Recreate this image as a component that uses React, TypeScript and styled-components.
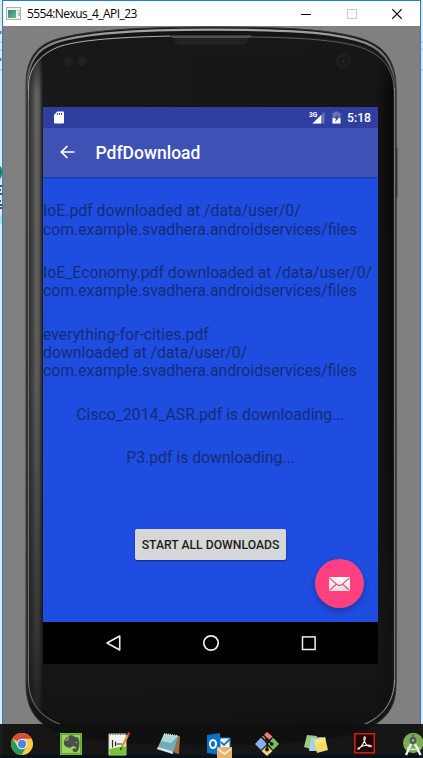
import React from "react";
import styled, { createGlobalStyle } from "styled-components";

const GlobalStyle = createGlobalStyle`
  html, body { margin: 0; padding: 0; overflow: hidden; background: #e4e8ec; }
  * { box-sizing: border-box; }
`;

const Desktop = styled.div`
  position: relative;
  width: 423px;
  height: 758px;
  display: flex;
  flex-direction: column;
  overflow: hidden;
  background: #e3e7ea;
  font-family: Roboto, sans-serif;
`;

const Backdrop = styled.svg`
  position: absolute;
  left: 0;
  top: 0;
`;

const EmulatorWindow = styled.div`
  position: relative;
  height: 724px;
  width: 419px;
  margin-left: 2px;
  border: 1px solid #1c82d4;
  border-bottom: 0;
  display: flex;
  flex-direction: column;
`;

const TitleBar = styled.div`
  height: 25px;
  flex: none;
  background: #fff;
  display: flex;
  align-items: center;
  padding-left: 3px;
`;

const TitleText = styled.div`
  flex: 1;
  margin-left: 6px;
  font: 12px/24px "Open Sans", "Noto Sans", sans-serif;
  letter-spacing: -0.55px;
  color: #000;
  white-space: nowrap;
`;

const WindowButton = styled.div`
  width: 45.5px;
  height: 25px;
  display: flex;
  align-items: center;
  justify-content: center;
`;

const Screen = styled.div`
  margin: 81px 0 0 40px;
  width: 335px;
  height: 557px;
  display: flex;
  flex-direction: column;
  background: #1f4de0;
`;

const StatusBar = styled.div`
  height: 21px;
  flex: none;
  background: #303f9f;
  color: #fff;
  display: flex;
  align-items: center;
  padding: 0 7px 0 10px;
`;

const SignalIcon = styled.svg`
  margin-left: auto;
  margin-right: 7px;
`;

const Clock = styled.div`
  margin-left: 6px;
  padding-top: 1px;
  font-size: 12.2px;
  line-height: 21px;
  font-weight: 500;
`;

const AppBar = styled.div`
  position: relative;
  height: 49px;
  flex: none;
  background: #3f51b5;
  box-shadow: 0 1px 2px rgba(0, 0, 0, 0.3);
  display: flex;
  align-items: center;
  padding-left: 16px;
  color: #fff;
`;

const BackIcon = styled.svg`
  margin-bottom: 1px;
`;

const AppTitle = styled.div`
  margin-left: 19.5px;
  padding-top: 2px;
  font-size: 17.5px;
  font-weight: 500;
  line-height: 47px;
`;

const Content = styled.div`
  position: relative;
  flex: 1;
  display: flex;
  flex-direction: column;
  align-items: center;
  gap: 25px;
  padding-top: 25.3px;
`;

const Message = styled.div<{ $full?: boolean }>`
  ${(p) => (p.$full ? "align-self: stretch;" : "")}
  font-size: 15.77px;
  line-height: 18.35px;
  color: #142c79;
  white-space: pre;
`;

const StartButton = styled.button`
  margin-top: 37px;
  width: 151px;
  height: 31px;
  flex: none;
  padding: 0;
  border: 0;
  border-radius: 2px;
  background: #d6d7d7;
  box-shadow: 0 1px 2px rgba(0, 0, 0, 0.45);
  color: #1c1c1d;
  font: 500 12.2px Roboto, sans-serif;
  white-space: nowrap;
`;

const Fab = styled.div`
  position: absolute;
  right: 14px;
  bottom: 14px;
  width: 49px;
  height: 49px;
  border-radius: 50%;
  background: #ff4081;
  box-shadow: 0 3px 6px rgba(0, 0, 0, 0.28);
  display: flex;
  align-items: center;
  justify-content: center;
`;

const NavBar = styled.div`
  height: 42px;
  flex: none;
  background: #000;
  display: flex;
  align-items: center;
  padding-left: 59.5px;
  gap: 78px;
`;

const Taskbar = styled.div`
  position: relative;
  height: 34px;
  flex: none;
  background: linear-gradient(rgba(15, 15, 15, 0.94) 0 31px, rgba(0, 12, 22, 0.95) 31px);
  display: flex;
  gap: 17px;
  padding: 4px 0 0 6px;
`;

const TaskIcon = styled.svg`
  width: 32px;
  height: 32px;
  flex: none;
  overflow: visible;
`;

const outer =
  "M26 84C26 60 36 46 54 40C84 30 140 27 211 27C282 27 325 29 356 37C384 44 396 60 396 88V684C396 706 388 720 364 730C336 741 280 745 211 745C140 745 86 742 58 732C36 724 26 708 26 684Z";
const inner =
  "M28 90C28 68 38 54 57 46.5C77 38.5 130 36 211 36C285 36 325 38 352 43.5C381 50 394 64 394 90V680C393 702 384 714 362 725C332 736 285 737 211 737C140 737 92 736 60 725C40 716 29 706 28 680Z";

function PhoneBackdrop() {
  return (
    <Backdrop width="423" height="758" viewBox="0 0 423 758">
      <defs>
        <linearGradient id="side" gradientUnits="userSpaceOnUse" x1="28" x2="394" y1="0" y2="0">
          <stop offset="0" stopColor="#292929" />
          <stop offset=".012" stopColor="#454545" />
          <stop offset=".022" stopColor="#646464" />
          <stop offset=".03" stopColor="#5b5b5b" />
          <stop offset=".041" stopColor="#181818" />
          <stop offset=".95" stopColor="#151515" />
          <stop offset="1" stopColor="#070707" />
        </linearGradient>
        <linearGradient id="fade" x1="0" x2="0" y1="0" y2="1">
          <stop offset="0" stopColor="#171717" />
          <stop offset=".03" stopColor="#171717" stopOpacity=".7" />
          <stop offset=".08" stopColor="#171717" stopOpacity="0" />
          <stop offset=".5" stopColor="#171717" stopOpacity=".1" />
          <stop offset=".86" stopColor="#171717" stopOpacity=".6" />
          <stop offset="1" stopColor="#101010" stopOpacity=".9" />
        </linearGradient>
        <linearGradient id="rim" gradientUnits="userSpaceOnUse" x1="0" x2="0" y1="27" y2="745">
          <stop offset="0" stopColor="#a5a5a5" />
          <stop offset=".03" stopColor="#777" />
          <stop offset=".09" stopColor="#444" />
          <stop offset=".9" stopColor="#353535" />
          <stop offset=".95" stopColor="#151515" />
        </linearGradient>
        <pattern id="mesh" width="4" height="4" patternUnits="userSpaceOnUse">
          <rect width="4" height="4" fill="#242424" />
          <path d="M0 0h1v1h-1zM2 2h1v1h-1z" fill="#111" />
        </pattern>
      </defs>
      <rect x="3" y="26" width="417" height="732" fill="#808080" />
      <path d="M0 42h2M0 50h2M0 70h2M421 42h2M421 49h2M421 70h2" stroke="#b5bbc0" />
      <path d="M0 31h1.5v3H0zM0 58h1.5v3H0z" fill="#777" />
      <path d="M0 166q2 1 2 6t-2 7z" fill="#11894d" />
      <path d="M0 186h2M0 190h1M0 194h2M0 201h1M0 205h2M0 208h2" stroke="#26221f" strokeWidth="1.5" />
      <path d="M0 215h2v9H0z" fill="#a5e5f2" />
      <path d="M396.7 148v49" stroke="#333" strokeWidth="1.5" />
      <path d={outer} fill="#141414" stroke="#353535" strokeWidth="1" />
      <path d={outer} transform="translate(1.5 2.9) scale(.993 .993)" fill="none" stroke="url(#rim)" strokeWidth="2.2" />
      <path d={inner} fill="url(#side)" />
      <path d={inner} fill="url(#fade)" />
      <path d={inner} fill="none" stroke="#252525" strokeWidth="1" />
      <path d="M28.5 100V86C29 68 39 55.5 57 47.5C77 39.5 125 37 172 36" fill="none" stroke="#bdbdbd" strokeWidth=".9" />
      <path d="M250 37C300 37.5 329 40 350 44.5C380 51 393 66 394 90" fill="none" stroke="#5b5b5b" strokeWidth="1" />
      <path d="M394.5 88V684" stroke="#777" strokeWidth="1.1" />
      <path d="M396 88V684" stroke="#353535" />
      <path d="M28.5 90V680C29 704 41 717 60 724" fill="none" stroke="#858585" strokeWidth=".8" />
      <path d="M394.5 680C394 703 382 717 365 724" fill="none" stroke="#969696" strokeWidth="1" />
      <path d="M169 35H252L248 38Q246 45 242 45H180Q176 45 174 39Z" fill="url(#mesh)" />
      <path d="M169 35.5H252L249 38H173Z" fill="#51515a" />
      <circle cx="68.5" cy="61.5" r="5" fill="#202020" />
      <circle cx="81.5" cy="61.5" r="5" fill="#202020" />
      <circle cx="343.5" cy="61" r="7.7" fill="#1e1e1f" />
      <circle cx="343.5" cy="61" r="4.5" fill="#19191c" />
      <circle cx="343.3" cy="61" r="1.5" fill="#25254c" />
    </Backdrop>
  );
}

function TaskIcons() {
  return (
    <>
      <TaskIcon viewBox="0 0 32 32">
        <circle cx="16" cy="16" r="11" fill="#fbcb43" />
        <path d="M16 16L6.4 10.6A11 11 0 0 1 25.6 10.8H16Z" fill="#d84c3e" />
        <path d="M6.4 10.6A11 11 0 0 0 15.5 27L20.5 18.5L16 20L11.5 18.5Z" fill="#249b5b" />
        <circle cx="16" cy="16" r="5.2" fill="#f5f5f5" />
        <circle cx="16" cy="16" r="4.2" fill="#4587ec" />
      </TaskIcon>
      <TaskIcon viewBox="0 0 32 32">
        <rect x="5" y="5" width="22" height="22" fill="#75b83b" />
        <rect x="6.5" y="6.5" width="19" height="19" fill="#9bd45d" stroke="#61a52b" />
        <path d="M9 12L13 8Q18 6 20 9L23 9.5Q25.5 14 23.5 21Q22.5 25 19 24Q16 22 19 20L21 21V19L18 18Q15 21 12 19Q8 18 9 12Z" fill="#4b5048" />
        <path d="M9 12L13 12V8" fill="none" stroke="#a5c681" />
        <circle cx="21.5" cy="14.5" r=".8" fill="#8ac456" />
      </TaskIcon>
      <TaskIcon viewBox="0 0 32 32">
        <path d="M5 6H22V27H5Z" fill="#f3f3ed" stroke="#c9cbc2" />
        <path d="M5.5 21Q14 18.5 22 18.5V27H5.5Z" fill="#78c62f" />
        <path d="M6 6.5H22" stroke="#666" strokeDasharray="1 1.5" />
        <path d="M8.5 12V19.5M11.5 13.5V18M12.5 16H18" stroke="#26331f" strokeWidth="1.2" />
        <path d="M24 7L17.5 20" stroke="#d9982c" strokeWidth="2.4" />
        <path d="M25.3 4.5L24 7" stroke="#c83a27" strokeWidth="2.6" />
        <path d="M16.5 19L16 22.5L18.5 20.5Z" fill="#333" />
      </TaskIcon>
      <TaskIcon viewBox="0 0 32 32">
        <path d="M11 6L27 8L26 26L22 25Z" fill="#9c713d" />
        <path d="M11 6L25 8L20 26L4 21Z" fill="#70acb8" />
        <path d="M11 6L25 8L18 15L8 13Z" fill="#c8e4e5" opacity=".75" />
        <path d="M4 21L20 26L19 23L5 19Z" fill="#d7e2e1" />
        <path d="M11 6L25 8" stroke="#cfdedf" strokeWidth="2" strokeDasharray="1 1" />
      </TaskIcon>
      <TaskIcon viewBox="0 0 32 32">
        <path d="M18 10H28V22H18Z" fill="#f5faff" stroke="#1679bb" />
        <path d="M19 14L22 17L28 11" fill="none" stroke="#1977b8" strokeWidth="1.8" />
        <path d="M5 7L18 5V27L5 25Z" fill="#0872c5" />
        <ellipse cx="11" cy="16" rx="3" ry="4" fill="none" stroke="#fff" strokeWidth="2" />
        <rect x="15" y="19" width="15" height="11" fill="#e5b475" />
        <path d="M16 21L22.5 26L29 21" fill="none" stroke="#fff4e0" strokeWidth="1.5" />
      </TaskIcon>
      <TaskIcon viewBox="0 0 32 32">
        <path d="M11 8.5L16 4L21.5 8.5L16 14Z" fill="#f17b7a" />
        <path d="M22 9.5L28 16L22 22L17 16Z" fill="#7bbd58" />
        <path d="M10 9.5L16 16L10 22L4 16Z" fill="#83b1ed" />
        <path d="M16 17.5L21.5 23L16 28L10.5 23Z" fill="#f2d37d" />
        <path d="M12 6.5L16 11V23M16 11.5L21 16" fill="none" stroke="#171717" strokeWidth="1.6" />
        <circle cx="16" cy="11.5" r="1.8" fill="#171717" />
        <circle cx="20.8" cy="16" r="1.8" fill="#171717" />
        <circle cx="16" cy="21.5" r="2" fill="#171717" />
      </TaskIcon>
      <TaskIcon viewBox="0 0 32 32">
        <path d="M7 7L17 8L14 22L4 19Z" fill="#9bca7c" />
        <path d="M11 10L22 9L21 23L9 23Z" fill="#a8cfeb" />
        <path d="M14 12L25 9L28 22L17 25Z" fill="#f3dc62" />
        <path d="M14 12L25 9L26 13L16 17Z" fill="#fff09b" opacity=".5" />
      </TaskIcon>
      <TaskIcon viewBox="0 0 32 32">
        <rect x="5.8" y="5.8" width="19.5" height="19" fill="#210404" stroke="#d82011" strokeWidth="1.5" />
        <path d="M15.2 9C17.5 8 16.5 14 10 21C7 22 10 18 19 17C24 17 23 20 19 18C16 16 14 11 15.2 9Z" fill="none" stroke="#eee" strokeWidth="1.1" />
      </TaskIcon>
      <TaskIcon viewBox="0 0 32 32">
        <circle cx="15.2" cy="15" r="10.2" fill="#7bad53" />
        <path d="M13.8 6h2.4v4h-2.4z" fill="#666" />
        <circle cx="15" cy="12.5" r="3.4" fill="#505854" />
        <circle cx="15" cy="12.5" r="1.3" fill="#a9c59b" />
        <path d="M13 16L8 27M17 16L22.5 27" stroke="#f0f0f0" strokeWidth="2.4" />
        <path d="M9 19.5Q15 23.5 22 19.5" fill="none" stroke="#e8e8e8" strokeWidth="1.4" />
      </TaskIcon>
    </>
  );
}

export default function App() {
  return (
    <Desktop>
      <GlobalStyle />
      <PhoneBackdrop />
      <EmulatorWindow>
        <TitleBar>
          <svg width="15" height="13" viewBox="0 0 15 13">
            <defs>
              <linearGradient id="pane" x2="1" y2="1">
                <stop stopColor="#3577a7" />
                <stop offset="1" stopColor="#64c56c" />
              </linearGradient>
            </defs>
            <rect x=".5" y=".5" width="14" height="12" fill="#f2f2f2" stroke="#b0b0b0" />
            <rect x="2" y="3" width="8" height="8" fill="url(#pane)" />
            <path d="M11 3h3v1h-3zM12 5h2v4h-2z" fill="#a1cdb9" />
          </svg>
          <TitleText>5554:Nexus_4_API_23</TitleText>
          <WindowButton>
            <svg width="10" height="10"><path d="M0 5.5h10" stroke="#000" /></svg>
          </WindowButton>
          <WindowButton>
            <svg width="10" height="10"><rect x=".5" y=".5" width="9" height="9" fill="none" stroke="#ccc" /></svg>
          </WindowButton>
          <WindowButton>
            <svg width="10" height="10"><path d="M.2 .2L9.8 9.8M9.8 .2L.2 9.8" stroke="#000" strokeWidth="1.2" /></svg>
          </WindowButton>
        </TitleBar>
        <Screen>
          <StatusBar>
            <svg width="12" height="13" viewBox="0 0 12 13">
              <path d="M4.2 .5H10Q11 .5 11 1.5V11.5Q11 12.5 10 12.5H2Q1 12.5 1 11.5V4Z" fill="#fff" />
              <path d="M4.5 2v2M6.5 2v2M8.5 2v2" stroke="#4351a5" />
            </svg>
            <SignalIcon width="16" height="13" viewBox="0 0 16 13">
              <path d="M3.5 12.5L15.5 .8V12.5Z" fill="#6974b8" />
              <path d="M3.5 12.5L12.2 4V12.5Z" fill="#fff" />
              <text x="0" y="6" fontFamily="Roboto, sans-serif" fontSize="6.6" fontWeight="700" fill="#fff">3G</text>
            </SignalIcon>
            <svg width="9" height="13" viewBox="0 0 9 13">
              <path d="M.5 1.8H2.8V.4H6.2V1.8H8.5V12.5H.5Z" fill="#6974b8" />
              <path d="M.5 7H8.5V12.5H.5Z" fill="#fff" />
              <path d="M6.5 3.5L2.3 7.5H4.2L3 11L6.8 7H4.8Z" fill="#303f9f" />
            </svg>
            <Clock>5:18</Clock>
          </StatusBar>
          <AppBar>
            <BackIcon width="17" height="16" viewBox="0 0 17 16">
              <path d="M15.5 8H2.5M8.4 2L2.3 8L8.4 14" fill="none" stroke="#fff" strokeWidth="1.6" />
            </BackIcon>
            <AppTitle>PdfDownload</AppTitle>
          </AppBar>
          <Content>
            <Message $full>{"IoE.pdf downloaded at /data/user/0/\ncom.example.svadhera.androidservices/files"}</Message>
            <Message $full>{"IoE_Economy.pdf downloaded at /data/user/0/\ncom.example.svadhera.androidservices/files"}</Message>
            <Message $full>{"everything-for-cities.pdf\ndownloaded at /data/user/0/\ncom.example.svadhera.androidservices/files"}</Message>
            <Message>Cisco_2014_ASR.pdf is downloading...</Message>
            <Message>P3.pdf is downloading...</Message>
            <StartButton>START ALL DOWNLOADS</StartButton>
            <Fab>
              <svg width="21" height="14" viewBox="0 0 21 14">
                <defs>
                  <linearGradient id="mail" x2="0" y2="1">
                    <stop stopColor="#fff" />
                    <stop offset="1" stopColor="#dcdcdc" />
                  </linearGradient>
                </defs>
                <rect width="21" height="14" rx="1" fill="url(#mail)" />
                <path d="M.5 1L8.5 7.8Q10.5 9.3 12.5 7.8L20.5 1M1 13L7.4 7M20 13L13.6 7" fill="none" stroke="#ff4081" strokeWidth="1.1" />
              </svg>
            </Fab>
          </Content>
          <NavBar>
            <svg width="20" height="20" viewBox="0 0 20 20">
              <path d="M4 10L16.7 3V17Z" fill="none" stroke="#eee" strokeWidth="1.6" strokeLinejoin="round" />
            </svg>
            <svg width="20" height="20" viewBox="0 0 20 20">
              <circle cx="10" cy="10" r="7.2" fill="none" stroke="#eee" strokeWidth="1.7" />
            </svg>
            <svg width="20" height="20" viewBox="0 0 20 20">
              <rect x="3.5" y="3.9" width="12.6" height="12.6" fill="none" stroke="#eee" strokeWidth="1.5" />
            </svg>
          </NavBar>
        </Screen>
      </EmulatorWindow>
      <Taskbar>
        <TaskIcons />
      </Taskbar>
    </Desktop>
  );
}
